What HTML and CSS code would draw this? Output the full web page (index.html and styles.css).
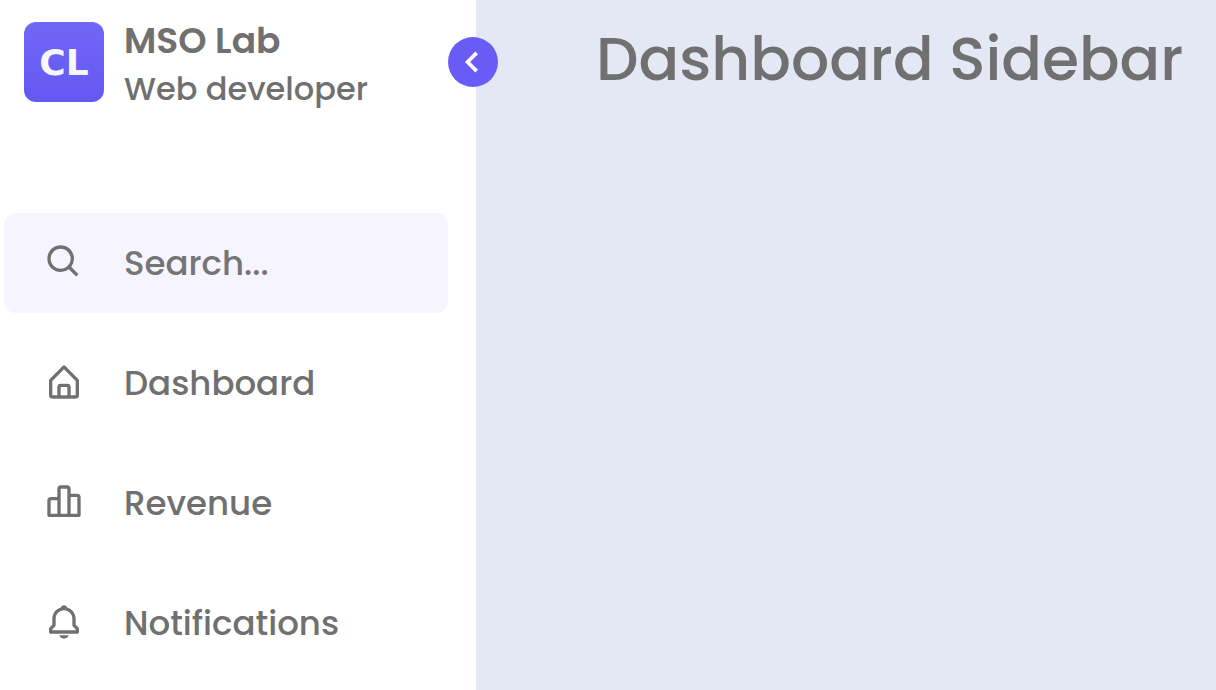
FILE: index.html
```html
<!DOCTYPE html>
<html lang="en">
<head>
<meta charset="utf-8">
<meta name="viewport" content="width=device-width, initial-scale=1">
<title>Dashboard Sidebar</title>
<link rel="stylesheet" href="styles.css">
</head>
<body>
<div class="layout">
  <aside class="sidebar">
    <header class="brand">
      <span class="logo">CL</span>
      <div class="brand-text">
        <span class="name">MSO Lab</span>
        <span class="role">Web developer</span>
      </div>
      <button class="toggle" type="button" aria-label="Collapse sidebar">
        <svg viewBox="0 0 24 24" aria-hidden="true"><path d="M13.293 6.293 7.586 12l5.707 5.707 1.414-1.414L10.414 12l4.293-4.293z"/></svg>
      </button>
    </header>
    <label class="row search">
      <svg class="icon" viewBox="0 0 24 24" aria-hidden="true"><path d="M10 18a7.952 7.952 0 0 0 4.897-1.688l4.396 4.396 1.414-1.414-4.396-4.396A7.952 7.952 0 0 0 18 10c0-4.411-3.589-8-8-8s-8 3.589-8 8 3.589 8 8 8zm0-14c3.309 0 6 2.691 6 6s-2.691 6-6 6-6-2.691-6-6 2.691-6 6-6z"/></svg>
      <input class="search-input" type="search" placeholder="Search..." aria-label="Search">
    </label>
    <nav class="menu">
      <a class="row" href="#">
        <svg class="icon" viewBox="0 0 24 24" aria-hidden="true"><path d="M5 22h14a2 2 0 0 0 2-2v-9a1 1 0 0 0-.29-.71l-8-8a1 1 0 0 0-1.41 0l-8 8A1 1 0 0 0 3 11v9a2 2 0 0 0 2 2zm5-2v-5h4v5zm-5-8.59 7-7 7 7V20h-3v-5a2 2 0 0 0-2-2h-4a2 2 0 0 0-2 2v5H5z"/></svg>
        <span>Dashboard</span>
      </a>
      <a class="row" href="#">
        <svg class="icon" viewBox="0 0 24 24" aria-hidden="true"><path d="M20 7h-4V4c0-1.103-.897-2-2-2h-4c-1.103 0-2 .897-2 2v5H4c-1.103 0-2 .897-2 2v9a1 1 0 0 0 1 1h18a1 1 0 0 0 1-1V9c0-1.103-.897-2-2-2zM4 11h4v8H4v-8zm6-1V4h4v15h-4v-9zm10 9h-4V9h4v10z"/></svg>
        <span>Revenue</span>
      </a>
      <a class="row" href="#">
        <svg class="icon" viewBox="0 0 24 24" aria-hidden="true"><path d="M19 13.586V10c0-3.217-2.185-5.927-5.145-6.742C13.562 2.52 12.846 2 12 2s-1.562.52-1.855 1.258C7.185 4.074 5 6.783 5 10v3.586l-1.707 1.707A.996.996 0 0 0 3 16v2a1 1 0 0 0 1 1h16a1 1 0 0 0 1-1v-2a.996.996 0 0 0-.293-.707L19 13.586zM19 17H5v-.586l1.707-1.707A.996.996 0 0 0 7 14v-4c0-2.757 2.243-5 5-5s5 2.243 5 5v4c0 .266.105.52.293.707L19 16.414V17zm-7 5a2.98 2.98 0 0 0 2.818-2H9.182A2.98 2.98 0 0 0 12 22z"/></svg>
        <span>Notifications</span>
      </a>
    </nav>
  </aside>
  <main class="content">
    <h1 class="title">Dashboard Sidebar</h1>
  </main>
</div>
</body>
</html>
```
FILE: styles.css
```css
* {
  box-sizing: border-box;
}

body {
  margin: 0;
  background: #e4e8f5;
  color: #707070;
  font-family: Poppins, Inter, "Liberation Sans", sans-serif;
  font-size: 34px;
  font-weight: 500;
}

.layout {
  display: flex;
  min-height: 100vh;
}

.sidebar {
  flex: 0 0 476px;
  min-width: 0;
  padding: 14px 28px 0 4px;
  background: #fff;
}

.brand {
  position: relative;
  display: flex;
  align-items: center;
  gap: 20px;
  height: 96px;
  padding-left: 20px;
  margin-bottom: 103px;
}

.logo {
  display: grid;
  place-items: center;
  width: 80px;
  height: 80px;
  border-radius: 12px;
  background: linear-gradient(#7067f5, #6558f3);
  color: #f7f7ff;
  font-family: "DejaVu Sans", sans-serif;
  font-size: 36px;
  font-weight: 700;
}

.brand-text {
  display: flex;
  flex-direction: column;
  padding-top: 6px;
  line-height: 48px;
}

.name {
  font-size: 36px;
  font-weight: 600;
}

.role {
  font-size: 32px;
}

.toggle {
  position: absolute;
  top: 50%;
  right: -50px;
  display: grid;
  place-items: center;
  width: 50px;
  height: 50px;
  padding: 0;
  transform: translateY(-50%);
  border: 0;
  border-radius: 50%;
  background: #695cf6;
  fill: #fff;
}

.toggle svg {
  width: 44px;
  height: 44px;
}

.row {
  display: flex;
  align-items: center;
  gap: 40px;
  height: 100px;
  padding-left: 40px;
  border-radius: 12px;
  color: inherit;
  text-decoration: none;
}

.icon {
  flex: none;
  width: 40px;
  height: 40px;
  margin-bottom: 2px;
  fill: currentColor;
}

.search {
  background: #f6f5ff;
}

.search-input {
  flex: 1;
  width: 100%;
  min-width: 0;
  padding: 0;
  border: 0;
  outline: 0;
  background: none;
  color: inherit;
  font: inherit;
}

.search-input::placeholder {
  color: #757575;
  opacity: 1;
}

.menu {
  display: flex;
  flex-direction: column;
  gap: 20px;
  margin-top: 20px;
}

.content {
  flex: 1;
  min-width: 0;
  padding: 14px 20px 0 120px;
}

.title {
  margin: 0;
  font-size: 60px;
  font-weight: 500;
  line-height: 90px;
  white-space: nowrap;
}
```
